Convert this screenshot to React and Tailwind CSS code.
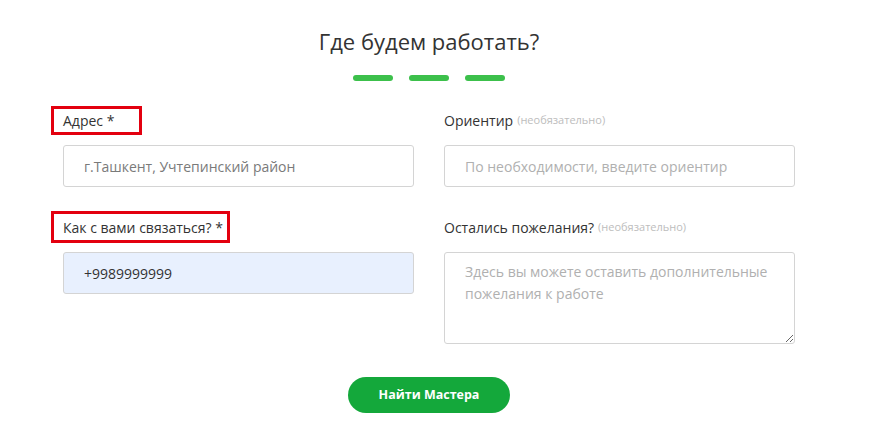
export default function App() {
  return (
    <div
      className="w-[880px] h-[432px] bg-white overflow-hidden"
      style={{ fontFamily: '"Open Sans", "Noto Sans", sans-serif' }}
    >
      <div className="ml-[63px] w-[732px] pt-[26px] flex flex-col">
        <h1 className="text-center text-[22px] leading-[30px] text-[#333] font-normal">
          Где будем работать?
        </h1>

        {/* step dashes */}
        <div className="mt-[19px] flex justify-center gap-[16px]">
          <span className="w-[40px] h-[6px] rounded-full bg-[#3cc04b]" />
          <span className="w-[40px] h-[6px] rounded-full bg-[#3cc04b]" />
          <span className="w-[40px] h-[6px] rounded-full bg-[#3cc04b]" />
        </div>

        <div className="mt-[25px] grid grid-cols-[351px_351px] gap-x-[30px]">
          <div>
            <div className="-ml-[12px] w-[91px] h-[29px] border-[3px] border-[#e3000f] pl-[9px] flex items-center text-[14px] text-[#333]">
              Адрес *
            </div>
            <input
              className="mt-[10px] w-full h-[42px] border border-[#d4d4d4] rounded-[3px] pl-[20px] text-[14px] outline-none placeholder:text-[#7a7a7a]"
              placeholder="г.Ташкент, Учтепинский район"
            />
          </div>
          <div>
            <div className="h-[29px] flex items-center text-[14px] text-[#333]">
              Ориентир
              <span className="ml-[4px] text-[11px] text-[#bdbdbd]">(необязательно)</span>
            </div>
            <input
              className="mt-[10px] w-full h-[42px] border border-[#d4d4d4] rounded-[3px] pl-[20px] text-[14px] outline-none placeholder:text-[#b0b0b0]"
              placeholder="По необходимости, введите ориентир"
            />
          </div>

          <div className="mt-[24px]">
            <div className="-ml-[12px] w-[179px] h-[32px] border-[3px] border-[#e3000f] pl-[9px] flex items-center text-[14px] text-[#333]">
              Как с вами связаться? *
            </div>
            <input
              className="mt-[9px] w-full h-[42px] border border-[#d4d4d4] rounded-[3px] pl-[20px] text-[14px] text-[#333] bg-[#e8f0fe] outline-none"
              defaultValue="+9989999999"
            />
          </div>
          <div className="mt-[24px]">
            <div className="h-[32px] flex items-center text-[14px] text-[#333]">
              Остались пожелания?
              <span className="ml-[4px] text-[11px] text-[#bdbdbd]">(необязательно)</span>
            </div>
            <textarea
              className="mt-[9px] block w-full h-[92px] border border-[#d4d4d4] rounded-[3px] pl-[20px] pr-[20px] pt-[8px] text-[14px] leading-[22px] outline-none placeholder:text-[#b0b0b0]"
              placeholder="Здесь вы можете оставить дополнительные пожелания к работе"
            />
          </div>
        </div>

        <div className="mt-[33px] flex justify-center">
          <button className="w-[162px] h-[36px] rounded-full bg-[#14a83b] text-white text-[12.5px] font-bold">
            Найти Мастера
          </button>
        </div>
      </div>
    </div>
  );
}
